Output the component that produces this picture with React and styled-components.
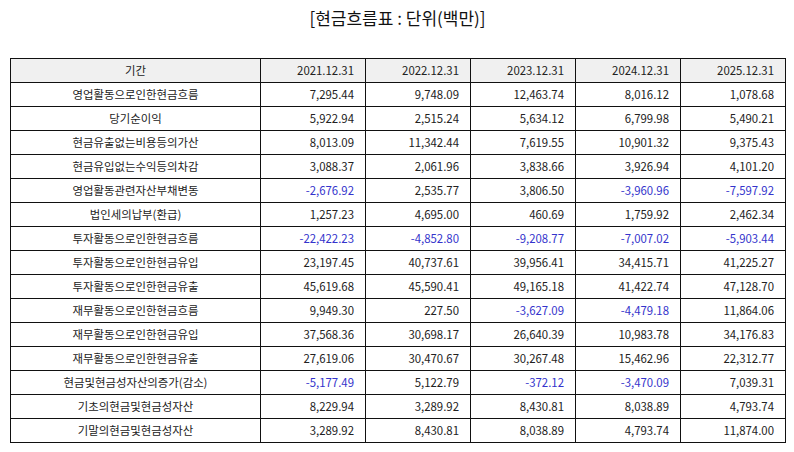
import React from "react";
import styled, { createGlobalStyle } from "styled-components";

const Global = createGlobalStyle`
  html, body { margin: 0; padding: 0; background: #fff; }
  body { font-family: "Noto Sans CJK KR", "Noto Sans", sans-serif; color: #222; }
`;

const Page = styled.div`
  width: 794px;
  height: 452px;
  box-sizing: border-box;
  padding: 5px 9px 0 10px;
  display: flex;
  flex-direction: column;
  align-items: stretch;
`;

const Title = styled.h1`
  margin: 0;
  height: 25px;
  line-height: 25px;
  font-size: 17px;
  font-weight: 400;
  text-align: center;
  color: #111;
`;

const Table = styled.table`
  margin-top: 28px;
  border-collapse: collapse;
  table-layout: fixed;
  width: 776px;
  font-size: 11.4px;
`;

const Th = styled.th`
  height: 23px;
  padding: 0 11px;
  border: 1px solid #111;
  background: #f0f0f0;
  font-weight: 400;
  text-align: ${(p) => (p.$left ? "center" : "right")};
  color: #222;
  line-height: 1;
`;

const Td = styled.td`
  height: 23px;
  padding: 0 11px;
  border: 1px solid #111;
  text-align: ${(p) => (p.$label ? "center" : "right")};
  color: ${(p) => (p.$neg ? "#3434cc" : "#222")};
  line-height: 1;
  white-space: nowrap;
`;

const cols = ["2021.12.31", "2022.12.31", "2023.12.31", "2024.12.31", "2025.12.31"];

const rows = [
  ["영업활동으로인한현금흐름", "7,295.44", "9,748.09", "12,463.74", "8,016.12", "1,078.68"],
  ["당기순이익", "5,922.94", "2,515.24", "5,634.12", "6,799.98", "5,490.21"],
  ["현금유출없는비용등의가산", "8,013.09", "11,342.44", "7,619.55", "10,901.32", "9,375.43"],
  ["현금유입없는수익등의차감", "3,088.37", "2,061.96", "3,838.66", "3,926.94", "4,101.20"],
  ["영업활동관련자산부채변동", "-2,676.92", "2,535.77", "3,806.50", "-3,960.96", "-7,597.92"],
  ["법인세의납부(환급)", "1,257.23", "4,695.00", "460.69", "1,759.92", "2,462.34"],
  ["투자활동으로인한현금흐름", "-22,422.23", "-4,852.80", "-9,208.77", "-7,007.02", "-5,903.44"],
  ["투자활동으로인한현금유입", "23,197.45", "40,737.61", "39,956.41", "34,415.71", "41,225.27"],
  ["투자활동으로인한현금유출", "45,619.68", "45,590.41", "49,165.18", "41,422.74", "47,128.70"],
  ["재무활동으로인한현금흐름", "9,949.30", "227.50", "-3,627.09", "-4,479.18", "11,864.06"],
  ["재무활동으로인한현금유입", "37,568.36", "30,698.17", "26,640.39", "10,983.78", "34,176.83"],
  ["재무활동으로인한현금유출", "27,619.06", "30,470.67", "30,267.48", "15,462.96", "22,312.77"],
  ["현금및현금성자산의증가(감소)", "-5,177.49", "5,122.79", "-372.12", "-3,470.09", "7,039.31"],
  ["기초의현금및현금성자산", "8,229.94", "3,289.92", "8,430.81", "8,038.89", "4,793.74"],
  ["기말의현금및현금성자산", "3,289.92", "8,430.81", "8,038.89", "4,793.74", "11,874.00"],
];

export default function App() {
  return (
    <>
      <Global />
      <Page>
        <Title>[현금흐름표 : 단위(백만)]</Title>
        <Table>
          <colgroup>
            <col style={{ width: 250 }} />
            {cols.map((c) => (
              <col key={c} style={{ width: 105 }} />
            ))}
          </colgroup>
          <thead>
            <tr>
              <Th $left>기간</Th>
              {cols.map((c) => (
                <Th key={c}>{c}</Th>
              ))}
            </tr>
          </thead>
          <tbody>
            {rows.map((r) => (
              <tr key={r[0]}>
                <Td $label>{r[0]}</Td>
                {r.slice(1).map((v, i) => (
                  <Td key={i} $neg={v.startsWith("-")}>{v}</Td>
                ))}
              </tr>
            ))}
          </tbody>
        </Table>
      </Page>
    </>
  );
}
